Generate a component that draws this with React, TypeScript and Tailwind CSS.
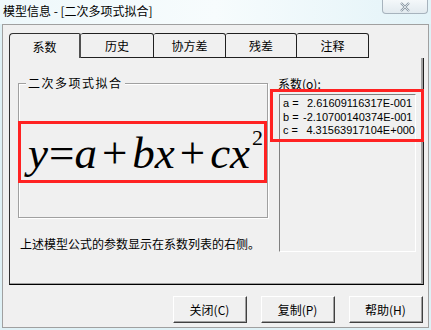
import React from 'react';

const cjk = "font-['Tahoma','Noto_Sans_CJK_SC',sans-serif]";

const tabs = ['系数', '历史', '协方差', '残差', '注释'];
const tabWidths = ['w-[72px]', 'w-[73px]', 'w-[72px]', 'w-[71px]', 'w-[72px]'];

const coefs = [
  { k: 'a =', v: '2.61609116317E-001' },
  { k: 'b =', v: '-2.10700140374E-001' },
  { k: 'c =', v: '4.31563917104E+000' },
];

function Button({ label }: { label: string }) {
  return (
    <div className="w-[74px] h-[27px] border border-t-white border-l-white border-r-[#404040] border-b-[#404040] bg-[#f0f0f0]">
      <div className="w-full h-full flex items-center justify-center border-r border-b border-[#a0a0a0] text-[12px] text-black pt-[1px]">
        {label}
      </div>
    </div>
  );
}

export default function App() {
  return (
    <div className={`w-[431px] h-[330px] flex flex-col overflow-hidden bg-[#dff1f6] ${cjk}`}>
      {/* title bar */}
      <div className="h-[24px] flex items-start bg-gradient-to-r from-[#eef8fb] via-[#f7fcfd] to-[#e3f3f8]">
        <span className="ml-[3px] mt-[4px] text-[12px] leading-[14px] text-black">模型信息 - [二次多项式拟合]</span>
        <div className="ml-auto mr-[3px] w-[46px] h-[14px] rounded-b-[4px] border border-t-0 border-[#a7b3bd] bg-gradient-to-b from-[#f4f8fa] to-[#e2eaef] flex items-center justify-center">
          <svg width="12" height="10" viewBox="0 0 12 10">
            <path d="M2 1 L10 9 M10 1 L2 9" stroke="#8a97a3" strokeWidth="2.2" fill="none" />
            <path d="M2 1 L10 9 M10 1 L2 9" stroke="#eef2f5" strokeWidth="0.8" fill="none" />
          </svg>
        </div>
      </div>

      {/* dialog body */}
      <div className="mx-[2px] h-[304px] border border-[#a0a0a0] bg-[#f0f0f0] flex flex-col">
        {/* tabs */}
        <div className="mt-[8px] ml-[6px] flex items-end h-[25px]">
          {tabs.map((t, i) => (
            <div
              key={t}
              className={`${tabWidths[i]} ${
                i === 0
                  ? 'h-[25px] border-l border-t border-r-2 border-l-[#303030] border-t-[#303030] border-r-[#505050] rounded-tl-[4px] rounded-tr-[2px] bg-[#f0f0f0]'
                  : 'h-[25px] border-t border-r border-b border-[#202020] rounded-tr-[3px] rounded-tl-[2px] bg-[#f0f0f0]'
              } flex items-center justify-center text-[12px] text-black`}
            >
              <span className={i === 0 ? 'mt-[1px]' : 'mt-[0px]'}>{t}</span>
            </div>
          ))}
        </div>

        {/* tab panel */}
        <div className="ml-[6px] w-[415px] h-[227px] border border-t-0 border-l-[#303030] border-b-[#000000] border-r-[#202020] flex">
          <div className="flex-1 border-r-2 border-b border-[#a0a0a0] flex">
            {/* left column */}
            <div className="w-[260px] flex flex-col">
              <div className="mt-[25px] ml-[8px] w-[250px] h-[135px] border border-[#a0a0a0] shadow-[inset_1px_1px_0_#ffffff,1px_1px_0_#ffffff] relative">
                <span className="absolute left-[7px] -top-[8px] px-[2px] bg-[#f0f0f0] text-[12px] leading-[14px] tracking-[1.5px] text-black">
                  二次多项式拟合
                </span>
                <div className="mt-[37px] -ml-[1px] w-[249px] h-[62px] border-[3px] border-[#ff2222] flex items-center">
                  <div className="ml-[7px] mt-[2px] flex items-baseline font-['Liberation_Serif','Times_New_Roman',serif] italic text-[45px] leading-none text-black">
                    <span>y</span>
                    <span className="not-italic ml-[1px]">=</span>
                    <span>a</span>
                    <span className="not-italic mx-[5px]">+</span>
                    <span>bx</span>
                    <span className="not-italic mx-[5px]">+</span>
                    <span>cx</span>
                    <span className="not-italic text-[22px] self-start -mt-[4px] ml-[2px]">2</span>
                  </div>
                </div>
              </div>
              <div className="mt-[19px] ml-[10px] text-[12px] leading-[14px] text-black">
                上述模型公式的参数显示在系数列表的右侧。
              </div>
            </div>

            {/* right column */}
            <div className="flex flex-col ml-[8px]">
              <div className="mt-[19px] text-[12px] leading-[14px] text-black">系数(o):</div>
              <div className="mt-[3px] ml-[1px] w-[137px] h-[158px] border border-l-[#808080] border-t-[#808080] border-r-white border-b-white relative">
                <div className="absolute -left-[10px] -top-[6px] w-[154px] h-[53px] border-[3px] border-[#ff2222]" />
                <div className="pt-[2px] pl-[3px] font-['Liberation_Sans',Arial,sans-serif] text-[11px] leading-[13.5px] text-black whitespace-nowrap">
                  {coefs.map((c) => (
                    <div key={c.k} className="flex">
                      <span className="w-[20px]">{c.k}</span>
                      <span className={c.v.startsWith('-') ? '' : 'ml-[4px]'}>{c.v}</span>
                    </div>
                  ))}
                </div>
              </div>
            </div>
          </div>
        </div>

        {/* buttons */}
        <div className="mt-[11px] flex justify-end gap-[14px] pr-[5px]">
          <Button label="关闭(C)" />
          <Button label="复制(P)" />
          <Button label="帮助(H)" />
        </div>
      </div>
    </div>
  );
}
